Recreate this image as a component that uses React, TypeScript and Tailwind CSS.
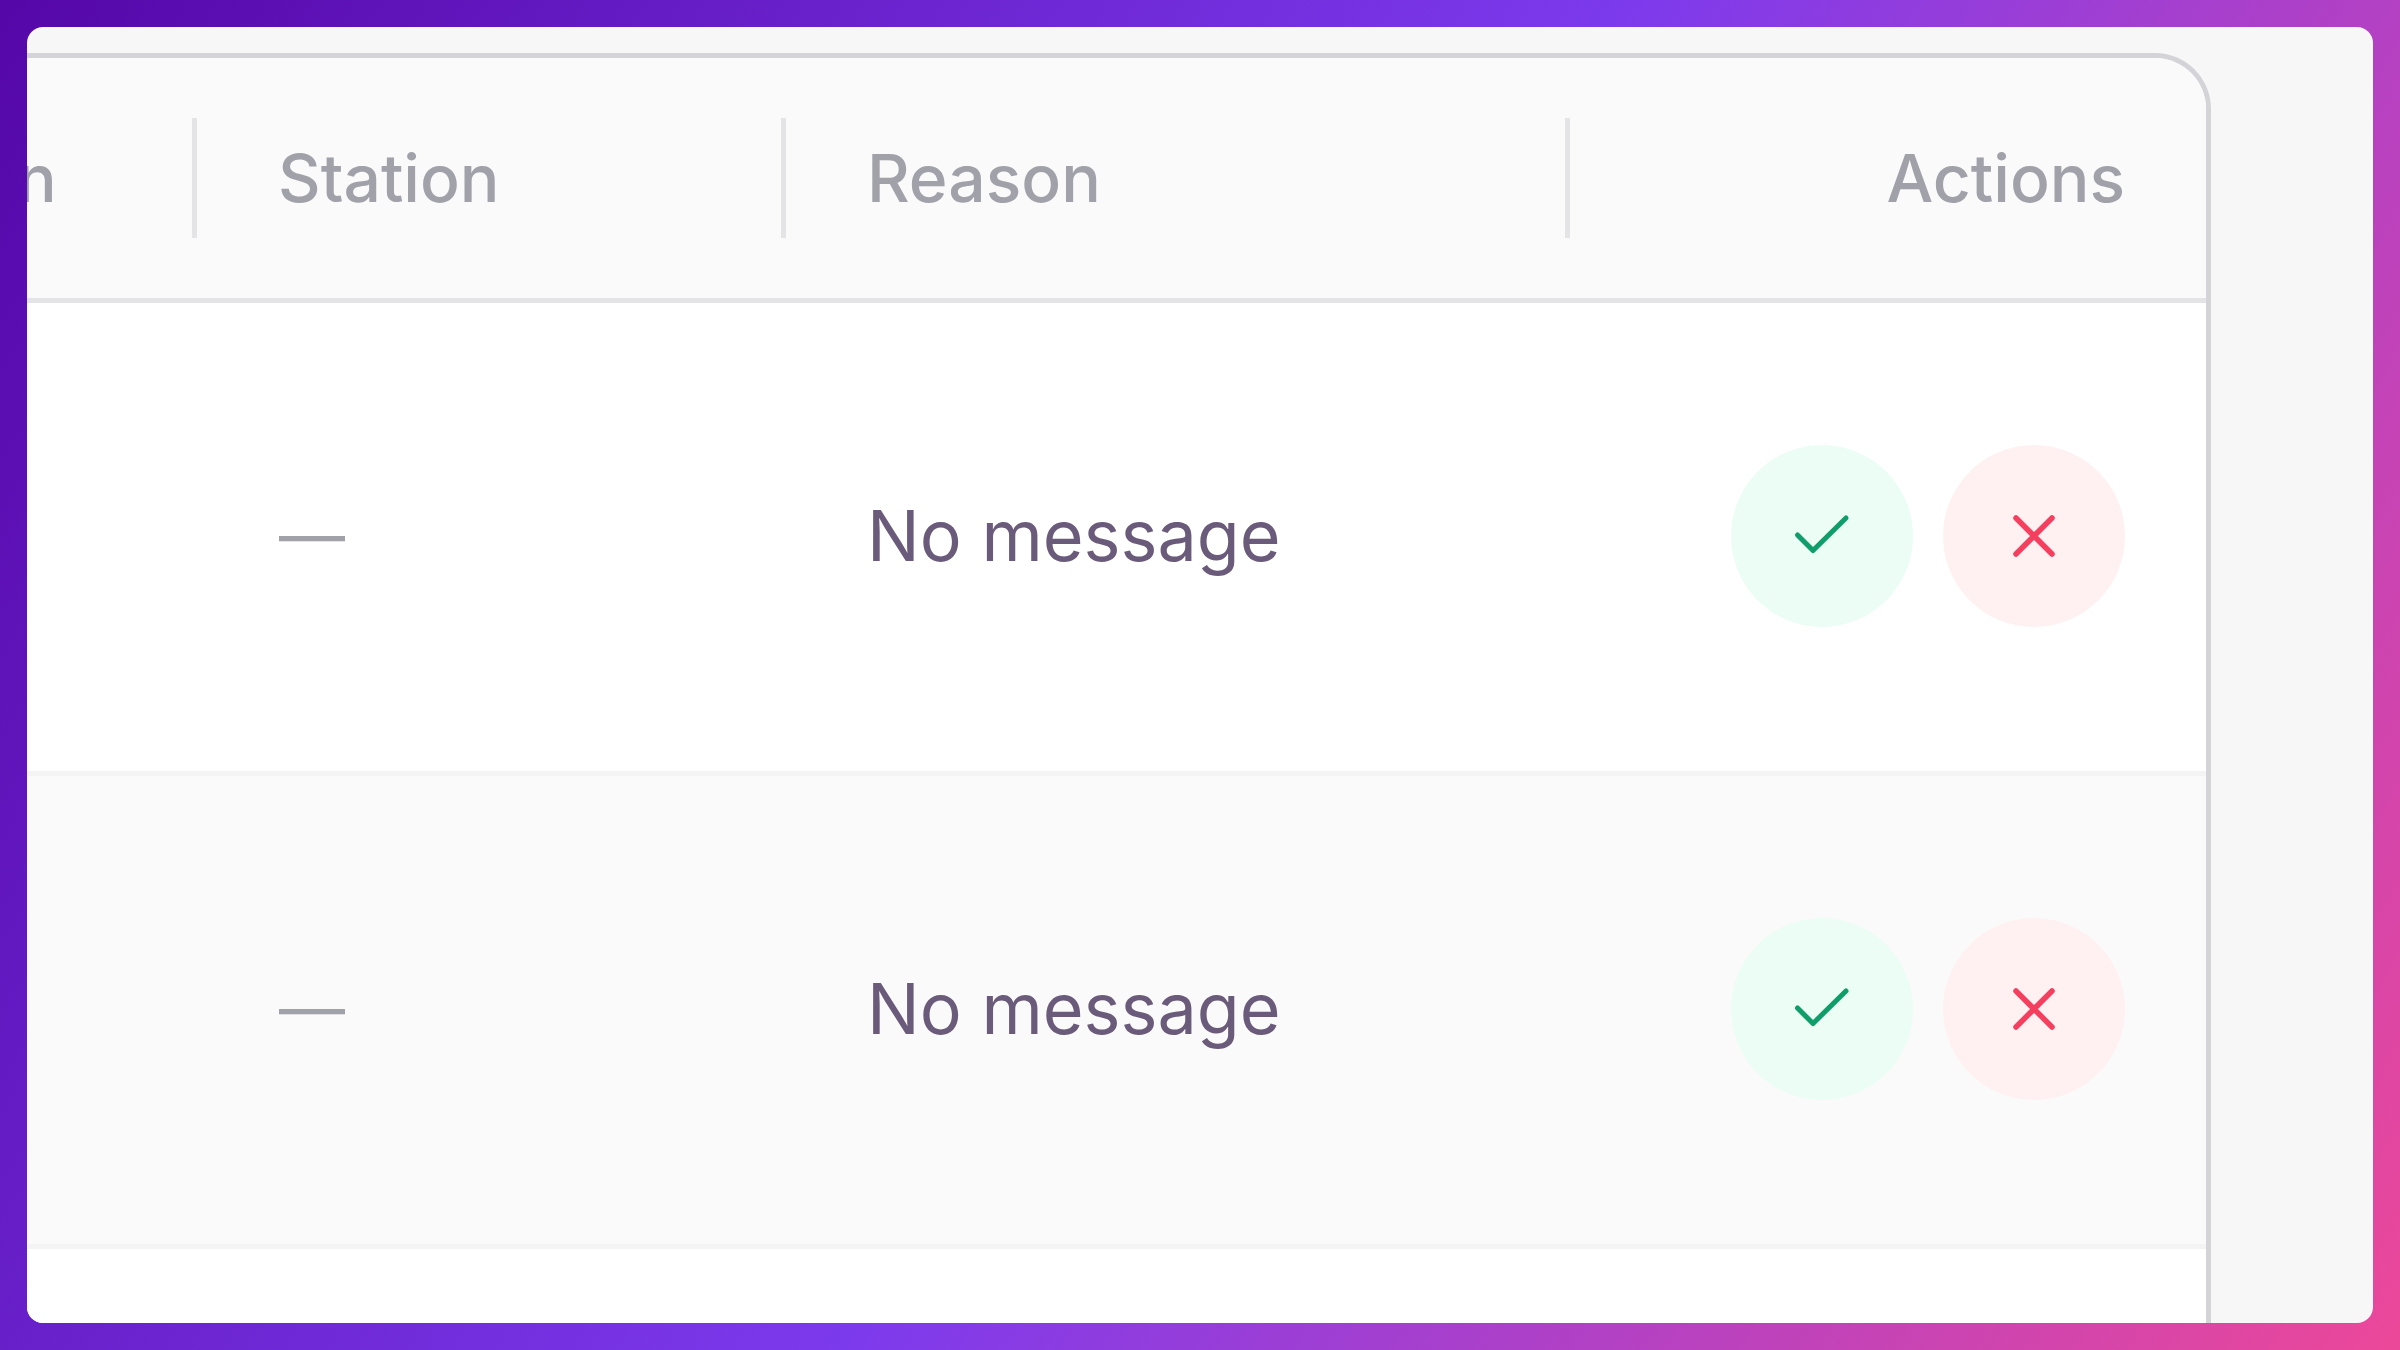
import React from "react";

type Request = { id: number; station: string; reason: string };

const requests: Request[] = [
  { id: 1, station: "—", reason: "No message" },
  { id: 2, station: "—", reason: "No message" },
];

const headText = "text-[66px] leading-[80px] font-medium text-[#a1a1aa]";

function HeadCell({ label, first }: { label: string; first?: boolean }) {
  return (
    <th scope="col" className="p-0 text-left font-medium">
      <div className="flex h-[120px] items-center justify-between border-r-[5px] border-[#e4e4e7]">
        <span className={first ? "-ml-[10px] " + headText : "pl-[81px] " + headText}>{label}</span>
      </div>
    </th>
  );
}

function CheckIcon() {
  return (
    <svg viewBox="0 0 64 64" className="size-16" fill="none" stroke="#0f9d6b" strokeWidth="5" strokeLinecap="round" strokeLinejoin="round" aria-hidden="true">
      <path d="M7.500 31 L23 46.500 L56 14" />
    </svg>
  );
}

function CrossIcon() {
  return (
    <svg viewBox="0 0 64 64" className="size-16" fill="none" stroke="#f43f5e" strokeWidth="5.500" strokeLinecap="round" aria-hidden="true">
      <path d="M14 14 L50 50 M50 14 L14 50" />
    </svg>
  );
}

export default function App() {
  return (
    <main className="h-screen bg-[linear-gradient(120deg,#5507a8_0%,#7c3aed_51%,#ec4899_100%)] p-[27px] font-['Inter',sans-serif]">
      <section className="h-full overflow-hidden rounded-2xl bg-[#f7f7f8] pt-[26px] pr-[162px]">
        <div className="h-full overflow-hidden rounded-tr-[56px] border-t-[5px] border-r-[5px] border-[#d4d4d8] bg-white">
          <table className="w-full table-fixed border-separate border-spacing-0">
            <colgroup>
              <col className="w-[170px]" />
              <col className="w-[589px]" />
              <col />
              <col className="w-[636px]" />
            </colgroup>
            <thead>
              <tr className="h-[245px] bg-[#fafafa] [&>th]:border-b-[5px] [&>th]:border-[#e4e4e7]">
                <HeadCell label="n" first />
                <HeadCell label="Station" />
                <HeadCell label="Reason" />
                <th scope="col" className={"p-0 pr-[81px] text-right " + headText}>Actions</th>
              </tr>
            </thead>
            <tbody>
              {requests.map((r) => (
                <tr key={r.id} className="h-[473px] even:bg-[#fafafa] [&>td]:border-b-[5px] [&>td]:border-[#f4f4f5]">
                  <td className="p-0" />
                  <td className="p-0 pb-1 pl-[82px] text-[66px] leading-[80px] text-[#a1a1aa]">{r.station}</td>
                  <td className="p-0 pb-0.5 pl-[81px] text-[70px] leading-[80px] text-[#6b5b7b]">{r.reason}</td>
                  <td className="p-0 pr-[81px] pb-0.5">
                    <div className="flex justify-end gap-[30px]">
                      <button type="button" aria-label="Approve" className="flex size-[182px] items-center justify-center rounded-full bg-[#ebfdf5]">
                        <CheckIcon />
                      </button>
                      <button type="button" aria-label="Reject" className="flex size-[182px] items-center justify-center rounded-full bg-[#fff1f2]">
                        <CrossIcon />
                      </button>
                    </div>
                  </td>
                </tr>
              ))}
            </tbody>
          </table>
        </div>
      </section>
    </main>
  );
}
